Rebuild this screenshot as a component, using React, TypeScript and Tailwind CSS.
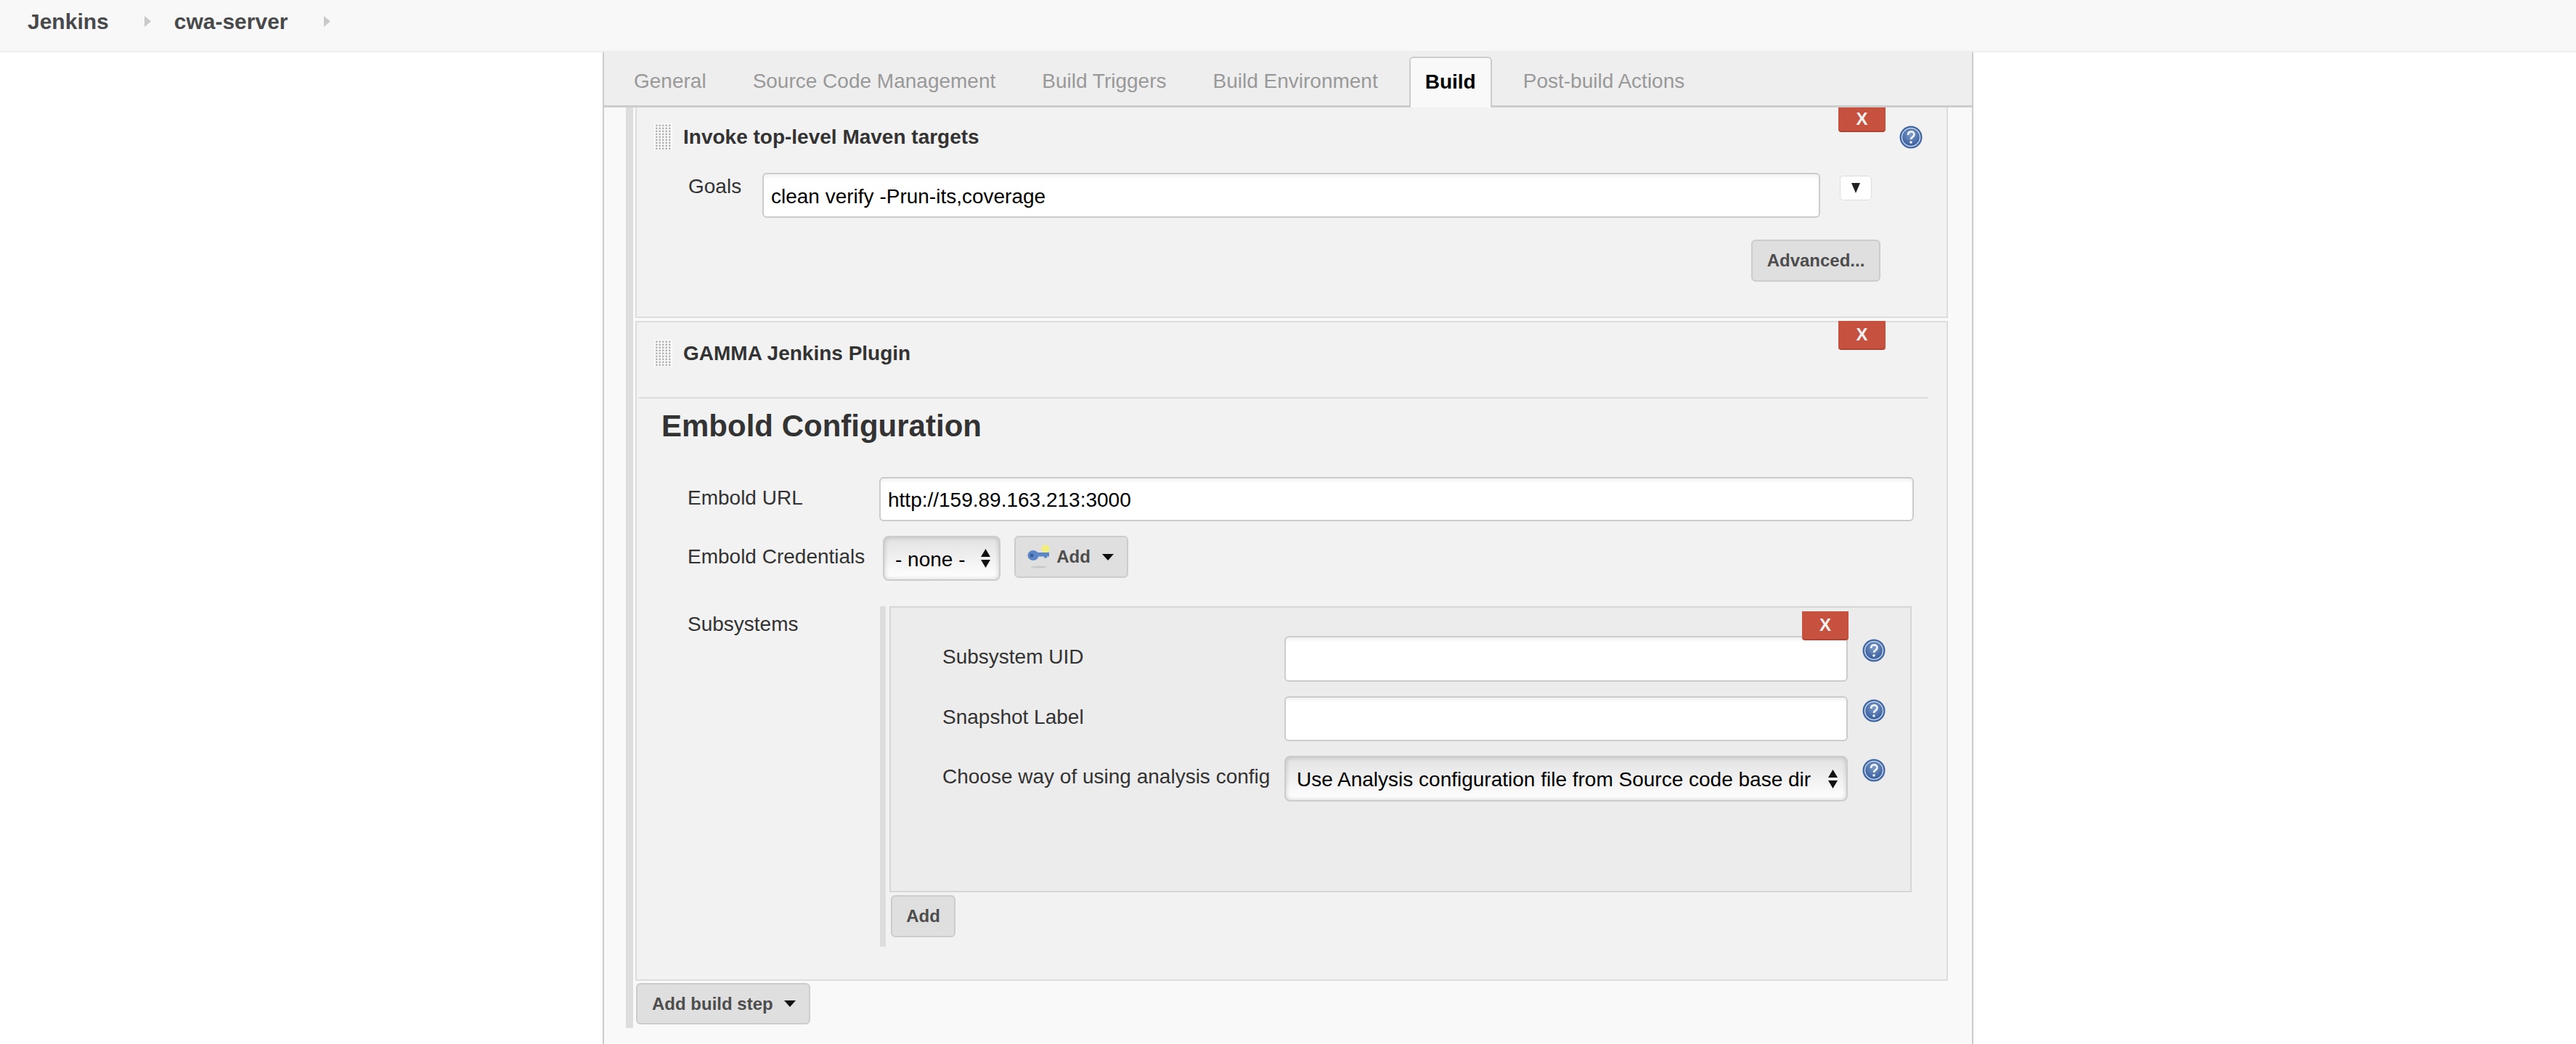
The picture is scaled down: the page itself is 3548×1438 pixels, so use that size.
import React from "react";

const tabs = ["General", "Source Code Management", "Build Triggers", "Build Environment", "Build", "Post-build Actions"];

const inputClass =
  "block bg-white border-2 border-[#cccccc] rounded-[6px] px-[10px] pt-[3px] text-[28px] text-black outline-none shadow-[inset_0_6px_6px_-4px_rgba(0,0,0,0.08)]";
const selectClass =
  "block appearance-none border-2 border-[#cccccc] rounded-[8px] pt-[3px] text-[28px] text-black outline-none bg-gradient-to-b from-[#e2e2e2] to-white shadow-[inset_0_0_6px_rgba(0,0,0,0.2)]";
const buttonClass =
  "flex items-center justify-center bg-[#dfdfdf] border-2 border-[#cccccc] rounded-[6px] text-[24px] font-bold text-[#4d4d4d]";

function HelpIcon() {
  return (
    <svg width="32" height="32" viewBox="0 0 32 32" className="shrink-0">
      <defs>
        <radialGradient id="helpFill" cx="50%" cy="35%" r="70%">
          <stop offset="0%" stopColor="#7d9cc8" />
          <stop offset="100%" stopColor="#2f5597" />
        </radialGradient>
      </defs>
      <circle cx="16" cy="16" r="15.5" fill="#3f66a3" />
      <circle cx="16" cy="16" r="12.5" fill="url(#helpFill)" stroke="#c3d2e6" strokeWidth="1.5" />
      <path d="M12 13c0-6 8.5-6 8.5-.8 0 3.400-4.500 3.400-4.500 6.800" fill="none" stroke="#f0f4fa" strokeWidth="2.600" />
      <circle cx="16" cy="23" r="1.800" fill="#f0f4fa" />
    </svg>
  );
}

function Grip() {
  const dots = [];
  for (let r = 0; r < 9; r++) {
    for (let c = 0; c < 5; c++) {
      dots.push(<rect key={`${r}-${c}`} x={2 + c * 4.5} y={1.500 + r * 4} width="2.500" height="2.500" fill="#b4b4b4" />);
    }
  }
  return (
    <svg width="25" height="37" className="shrink-0 bg-[#fbfbfb]">
      {dots}
    </svg>
  );
}

function Caret({ className = "" }: { className?: string }) {
  return (
    <svg width="16" height="9" viewBox="0 0 16 9" className={className}>
      <path d="M0 0h16L8 9z" fill="#111" />
    </svg>
  );
}

function SelectArrows() {
  return (
    <svg width="13" height="26" viewBox="0 0 13 26" className="pointer-events-none absolute right-[14px] top-1/2 -translate-y-1/2">
      <path d="M6.500 0L13 11H0zM0 15h13L6.500 26z" fill="#111" />
    </svg>
  );
}

function KeyIcon() {
  return (
    <svg width="32" height="34" viewBox="0 0 32 34" className="shrink-0">
      <circle cx="25" cy="6" r="5.500" fill="#f2ee7c" />
      <ellipse cx="16" cy="31" rx="11" ry="1.500" fill="#c8c8c8" />
      <ellipse cx="8" cy="15" rx="7.500" ry="7" fill="#5b87c9" />
      <circle cx="6" cy="15" r="2.500" fill="#3a5f99" />
      <path d="M13 11h17v5.500h-3v2h-4v-2H13z" fill="#5b87c9" />
    </svg>
  );
}

function DeleteButton({ className }: { className: string }) {
  return (
    <div
      className={`absolute flex items-center justify-center bg-[#c6513e] border-b-2 border-[#ad4534] rounded-b-[4px] text-[24px] font-bold text-[#f2f2f2] ${className}`}
    >
      X
    </div>
  );
}

function Row({ label, children }: { label: string; children: React.ReactNode }) {
  return (
    <div className="flex items-start">
      <div className="w-[497px] shrink-0 whitespace-nowrap pl-[26px] pt-[13px] leading-[32px] text-[28px] text-[#333333]">{label}</div>
      <div className="w-[776px] shrink-0">{children}</div>
      <div className="ml-[20px] mt-[4px]">
        <HelpIcon />
      </div>
    </div>
  );
}

export default function App() {
  return (
    <div className="h-[1438px] overflow-hidden bg-white font-['Liberation_Sans',Arial,sans-serif]">
      {/* Breadcrumb */}
      <div className="flex h-[72px] items-start border-b-2 border-[#eceff1] bg-[#f8f8f8] pl-[38px] pt-[12px] text-[30px] font-bold leading-[36px] text-[#48494b]">
        <span>Jenkins</span>
        <svg width="9" height="15" viewBox="0 0 9 15" className="ml-[49px] mr-[32px] mt-[10px]">
          <path d="M0 0l9 7.500L0 15z" fill="#c9c9c9" />
        </svg>
        <span>cwa-server</span>
        <svg width="9" height="15" viewBox="0 0 9 15" className="ml-[49px] mt-[10px]">
          <path d="M0 0l9 7.500L0 15z" fill="#c9c9c9" />
        </svg>
      </div>

      <div className="mx-auto flex h-[1366px] w-[1888px] flex-col border-x-2 border-[#cccccc] bg-[#f9f9f9]">
        {/* Tabs */}
        <div className="flex h-[76px] shrink-0 items-end gap-[22px] border-b-[3px] border-[#cccccc] bg-[#eeeeee] pl-[20px] text-[28px]">
          {tabs.map((tab) =>
            tab === "Build" ? (
              <div
                key={tab}
                className="-mb-[3px] flex h-[70px] items-center rounded-t-[6px] border-x-2 border-t-2 border-[#cccccc] bg-[#f9f9f9] px-[20px] pb-[3px] font-bold text-black"
              >
                {tab}
              </div>
            ) : (
              <div key={tab} className="flex h-[66px] items-center px-[21px] text-[#999999]">
                {tab}
              </div>
            )
          )}
        </div>

        {/* Build steps */}
        <div className="ml-[30px] w-[1821px] border-l-[10px] border-[#dddddd] pl-[3px]">
          {/* Maven step */}
          <div className="relative h-[290px] border-x-2 border-b-2 border-[#dddddd] bg-[#f2f2f2] pt-[22px]">
            <DeleteButton className="right-[84px] top-0 h-[34px] w-[65px]" />
            <div className="flex h-[37px] items-center pl-[24px] pr-[33px]">
              <Grip />
              <span className="ml-[15px] text-[28px] font-bold text-[#333333]">Invoke top-level Maven targets</span>
              <div className="ml-auto">
                <HelpIcon />
              </div>
            </div>
            <div className="mt-[31px] flex items-start">
              <div className="w-[173px] shrink-0 pl-[71px] pt-[3px] text-[28px] leading-[32px] text-[#333333]">Goals</div>
              <input readOnly value="clean verify -Prun-its,coverage" className={`${inputClass} h-[62px] w-[1457px]`} />
              <div className="ml-[27px] mt-[4px] flex h-[34px] w-[44px] items-center justify-center rounded-[5px] border border-[#dddddd] bg-white">
                <svg width="12" height="14" viewBox="0 0 12 14">
                  <path d="M0 0h12L6 14z" fill="#222" />
                </svg>
              </div>
            </div>
            <div className="mt-[30px] flex justify-end pr-[91px]">
              <div className={`${buttonClass} h-[58px] w-[178px]`}>Advanced...</div>
            </div>
          </div>

          {/* GAMMA step */}
          <div className="relative mt-[4px] h-[909px] border-x-2 border-y-2 border-[#dddddd] bg-[#f2f2f2] pt-[24px]">
            <DeleteButton className="right-[84px] -top-[2px] h-[40px] w-[65px]" />
            <div className="flex h-[37px] items-center pl-[24px]">
              <Grip />
              <span className="ml-[15px] text-[28px] font-bold text-[#333333]">GAMMA Jenkins Plugin</span>
            </div>
            <div className="ml-[3px] mr-[25px] mt-[42px] border-t-2 border-[#dddddd] pl-[31px] pt-[14px]">
              <h2 className="text-[42px] font-bold leading-[48px] text-[#333333]">Embold Configuration</h2>
            </div>

            <div className="mt-[46px] flex items-start">
              <div className="w-[334px] shrink-0 pl-[70px] pt-[13px] text-[28px] leading-[32px] text-[#333333]">Embold URL</div>
              <input readOnly value="http://159.89.163.213:3000" className={`${inputClass} h-[61px] w-[1425px]`} />
            </div>

            <div className="mt-[20px] flex items-start">
              <div className="w-[339px] shrink-0 pl-[70px] pt-[13px] text-[28px] leading-[32px] text-[#333333]">Embold Credentials</div>
              <div className="relative">
                <select className={`${selectClass} h-[62px] w-[162px] pl-[15px]`}>
                  <option>- none -</option>
                </select>
                <SelectArrows />
              </div>
              <div className={`${buttonClass} ml-[19px] h-[58px] w-[157px] gap-[8px] pr-[2px]`}>
                <KeyIcon />
                <span>Add</span>
                <Caret className="ml-[8px]" />
              </div>
            </div>

            <div className="mt-[35px] flex items-start">
              <div className="w-[335px] shrink-0 pl-[70px] pt-[9px] text-[28px] leading-[32px] text-[#333333]">Subsystems</div>
              <div className="h-[469px] border-l-[8px] border-[#dddddd] pl-[5px]">
                <div className="relative h-[394px] w-[1408px] border-2 border-[#d6d6d6] bg-[#ececec] pt-[39px]">
                  <DeleteButton className="right-[85px] top-[5px] z-10 h-[40px] w-[64px]" />
                  <div className="flex flex-col gap-[20px] pl-[45px]">
                    <Row label="Subsystem UID">
                      <input readOnly className={`${inputClass} h-[63px] w-full`} />
                    </Row>
                    <Row label="Snapshot Label">
                      <input readOnly className={`${inputClass} h-[62px] w-full`} />
                    </Row>
                    <Row label="Choose way of using analysis config">
                      <div className="relative">
                        <select className={`${selectClass} h-[63px] w-full pl-[15px]`}>
                          <option>Use Analysis configuration file from Source code base dir</option>
                        </select>
                        <SelectArrows />
                      </div>
                    </Row>
                  </div>
                </div>
                <div className={`${buttonClass} ml-[2px] mt-[4px] h-[58px] w-[89px]`}>Add</div>
              </div>
            </div>
          </div>

          <div className="pb-[5px] pt-[3px]">
            <div className={`${buttonClass} ml-[1px] h-[57px] w-[240px] justify-start gap-[15px] pl-[20px]`}>
              <span>Add build step</span>
              <Caret />
            </div>
          </div>
        </div>
      </div>
    </div>
  );
}
